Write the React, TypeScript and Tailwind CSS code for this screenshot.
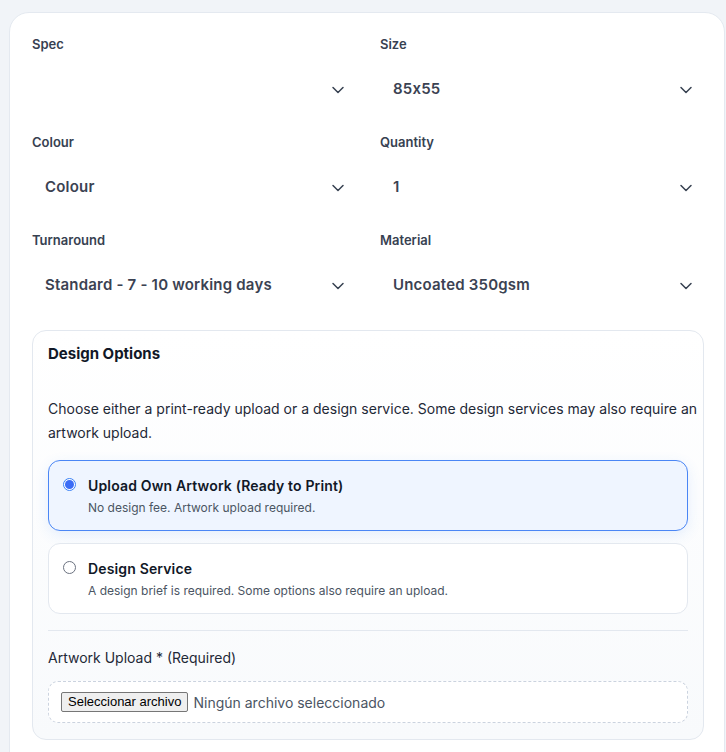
import { ChevronDown } from "lucide-react";

const fields = [
  { label: "Spec", value: "" },
  { label: "Size", value: "85x55" },
  { label: "Colour", value: "Colour" },
  { label: "Quantity", value: "1" },
  { label: "Turnaround", value: "Standard - 7 - 10 working days" },
  { label: "Material", value: "Uncoated 350gsm" },
];

function SelectField({ label, value }: { label: string; value: string }) {
  return (
    <div>
      <div className="text-[13px] leading-[18px] font-semibold text-[#374151] mb-[13px]">{label}</div>
      <div className="h-[47px] flex items-center justify-between pl-[13px] pr-[8px] bg-white rounded-lg">
        <span className="text-[15px] tracking-[0.2px] font-semibold text-[#3b4252] [font-feature-settings:'calt'_0]">{value}</span>
        <ChevronDown size={20} strokeWidth={1.8} className="text-[#374151]" />
      </div>
    </div>
  );
}

function Radio({ checked }: { checked: boolean }) {
  return checked ? (
    <span className="mt-[2px] w-[13px] h-[13px] rounded-full border border-[#3b82f6] bg-white flex items-center justify-center shrink-0">
      <span className="w-[9px] h-[9px] rounded-full bg-[#3b6cf6]" />
    </span>
  ) : (
    <span className="mt-[2px] w-[13px] h-[13px] rounded-full border border-[#6b7280] bg-white shrink-0" />
  );
}

function OptionCard({ title, sub, selected }: { title: string; sub: string; selected: boolean }) {
  return (
    <div
      className={
        selected
          ? "rounded-xl border border-[#4a86f5] bg-[#eff5ff] shadow-[0_4px_14px_rgba(59,130,246,0.12)] pl-[14px] pr-4 pt-[15px] pb-[14px] flex gap-3"
          : "rounded-xl border border-[#e3e8ef] bg-white pl-[14px] pr-4 pt-[15px] pb-[14px] flex gap-3"
      }
    >
      <Radio checked={selected} />
      <div>
        <div className="text-[14px] leading-5 font-semibold tracking-[0.15px] text-[#111827]">{title}</div>
        <div className="mt-1 text-[12px] leading-4 text-[#4b5563]">{sub}</div>
      </div>
    </div>
  );
}

export default function App() {
  return (
    <div className="min-h-screen bg-[#f1f4f8] pl-[9px] pr-[1px] pt-[12px]" style={{ fontFamily: "Inter, 'Noto Sans', sans-serif" }}>
      <div className="bg-white border border-[#e4e9f0] rounded-[20px] pl-[22px] pr-[20px] pt-[22px] pb-10">
        <div className="grid grid-cols-2 gap-x-6 gap-y-5">
          {fields.map((f) => (
            <SelectField key={f.label} label={f.label} value={f.value} />
          ))}
        </div>

        <div className="mt-[21px] rounded-[14px] border border-[#e3e8ef] bg-gradient-to-b from-white to-[#f8fafc] px-[15px] pt-[13px] pb-4">
          <div className="text-[15px] leading-5 font-bold text-[#111827]">Design Options</div>
          <p className="mt-[33px] text-[14px] leading-6 text-[#1f2937] -mr-5">
            Choose either a print-ready upload or a design service. Some design services may also require an artwork upload.
          </p>
          <div className="mt-[15px] flex flex-col gap-3">
            <OptionCard selected title="Upload Own Artwork (Ready to Print)" sub="No design fee. Artwork upload required." />
            <OptionCard selected={false} title="Design Service" sub="A design brief is required. Some options also require an upload." />
          </div>
          <div className="mt-4 border-t border-[#e3e8ef]" />
          <div className="mt-[17px] text-[14px] leading-5 text-[#1f2937]">Artwork Upload * (Required)</div>
          <div className="mt-[13px] h-[42px] rounded-[10px] border border-dashed border-[#cbd3df] bg-white flex items-center pl-3 gap-[5px]">
            <span
              className="px-[6px] h-[20px] flex items-center bg-[#efefef] border border-[#767676] rounded-[2px] text-[13px] text-black"
              style={{ fontFamily: "'Liberation Sans', Arial, sans-serif" }}
            >
              Seleccionar archivo
            </span>
            <span className="text-[14px] text-[#4b5563]">Ningún archivo seleccionado</span>
          </div>
        </div>
      </div>
    </div>
  );
}
